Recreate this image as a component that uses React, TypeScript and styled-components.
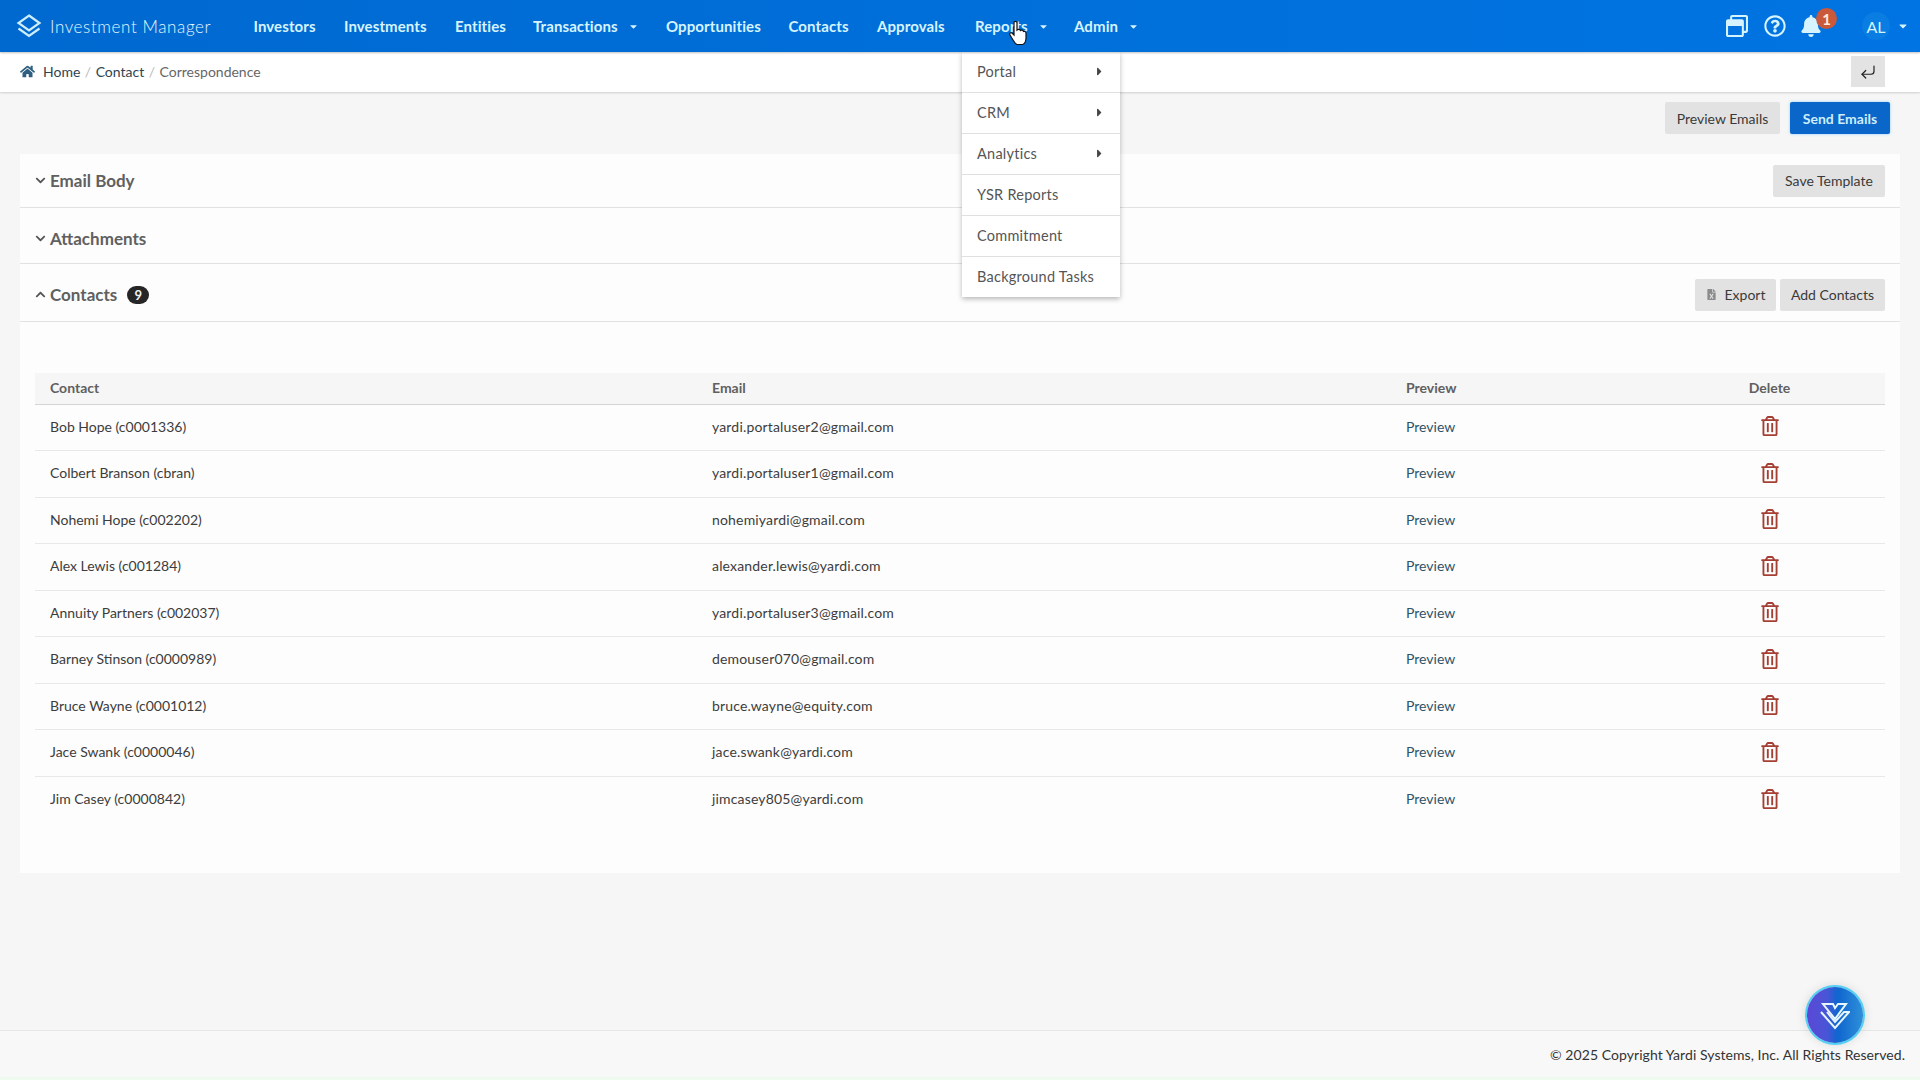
import styled, { createGlobalStyle } from "styled-components";
import { FaHome, FaChevronDown, FaChevronUp, FaCaretRight, FaCaretDown, FaFileExcel, FaBell, FaRegWindowRestore, FaRegQuestionCircle, FaRegTrashAlt } from "react-icons/fa";
import { CornerDownLeft } from "lucide-react";

const GlobalStyle = createGlobalStyle`
    * {
        box-sizing: border-box;
    }
    html, body {
        margin: 0;
        padding: 0;
    }
    body {
        background: #f6f6f6;
        color: #3c3c3c;
        font-family: "Lato", "Noto Sans", sans-serif;
        font-size: 14.5px;
    }
`

const Page = styled.div`
    background: #f6f6f6;
    border-bottom: 3px solid #effaef;
    display: flex;
    flex-direction: column;
    height: 1080px;
    overflow: hidden;
    position: relative;
    width: 1920px;
`

const NavBar = styled.header`
    align-items: center;
    background: linear-gradient(90deg, #0069d0 0%, #0070db 60%, #0074e2 100%);
    box-shadow: 0 1px 2px rgba(0, 0, 0, .25);
    display: flex;
    flex: 0 0 52px;
    padding: 0 0 0 16px;
    position: relative;
    z-index: 3;
`

const Brand = styled.div`
    align-items: center;
    color: #e4f7ff;
    display: flex;
    font-size: 17px;
    font-weight: 300;
    gap: 8px;
    letter-spacing: .6px;
    width: 237.5px;
`

const NavItem = styled.a<{ $width: number }>`
    align-items: center;
    color: #d6f4ff;
    display: flex;
    font-size: 15px;
    font-weight: 700;
    gap: 10px;
    height: 52px;
    letter-spacing: .1px;
    width: ${(p) => p.$width}px;
`

const NavRight = styled.div`
    align-items: center;
    color: #d6f4ff;
    display: flex;
    margin-left: auto;
    padding-right: 11px;
`

const NavIcon = styled.span<{ $width: number }>`
    align-items: center;
    display: flex;
    font-size: 22px;
    justify-content: center;
    position: relative;
    width: ${(p) => p.$width}px;
`

const CountBadge = styled.span`
    align-items: center;
    background: #c9593a;
    border-radius: 50%;
    color: #fbe9dc;
    display: flex;
    font-size: 15px;
    font-weight: 700;
    height: 21px;
    justify-content: center;
    left: 23px;
    position: absolute;
    top: -7px;
    width: 21px;
`

const Avatar = styled.span`
    align-items: center;
    background: #0a7de2;
    border-radius: 50%;
    color: #d6f4ff;
    display: flex;
    font-size: 16px;
    height: 28px;
    justify-content: center;
    margin: 0 7px 0 33px;
    width: 28px;
`

const Crumbs = styled.div`
    align-items: center;
    background: #fff;
    box-shadow: 0 1px 2px rgba(0, 0, 0, .16);
    display: flex;
    flex: 0 0 40px;
    font-size: 14px;
    padding: 0 35px 1px 20px;
    position: relative;
    z-index: 1;
`

const HomeIcon = styled(FaHome)`
    color: #2f5f80;
    font-size: 15px;
    margin-right: 8px;
`

const Crumb = styled.span<{ $current?: boolean }>`
    color: ${(p) => (p.$current ? "#666" : "#2f4452")};
`

const Slash = styled.span`
    color: #bbb;
    margin: 0 4.5px;
`

const BackButton = styled.button`
    align-items: center;
    background: #e3e3e3;
    border: 0;
    color: #222;
    display: flex;
    height: 31px;
    justify-content: center;
    margin-left: auto;
    padding: 0;
    width: 34px;
`

const TopActions = styled.div`
    align-items: center;
    display: flex;
    flex: 0 0 62px;
    gap: 10px;
    justify-content: flex-end;
    padding: 0 30px 10px 0;
`

const Button = styled.button<{ $primary?: boolean; $width: number }>`
    align-items: center;
    background: ${(p) => (p.$primary ? "#0a66c8" : "#e2e2e2")};
    border: 0;
    border-radius: 2px;
    box-shadow: ${(p) => (p.$primary ? "0 0 3px rgba(120, 200, 255, .8)" : "none")};
    color: ${(p) => (p.$primary ? "#cdeefc" : "#3a3a3a")};
    display: flex;
    font-family: inherit;
    font-size: 14px;
    font-weight: ${(p) => (p.$primary ? 700 : 400)};
    gap: 8px;
    height: 32px;
    justify-content: center;
    padding: 0;
    width: ${(p) => p.$width}px;
`

const Card = styled.main`
    background: #fdfdfd;
    display: flex;
    flex: 0 0 719px;
    flex-direction: column;
    margin: 0 20px;
`

const Section = styled.div<{ $height: number; $top?: number }>`
    align-items: center;
    border-bottom: 1px solid #e2e2e2;
    display: flex;
    flex: 0 0 ${(p) => p.$height}px;
    gap: 4px;
    padding: ${(p) => p.$top ?? 0}px 15px 0 15px;
`

const Chevron = styled.span`
    color: #555;
    display: flex;
    font-size: 11px;
`

const SectionTitle = styled.span`
    color: #606060;
    font-size: 17px;
    font-weight: 700;
`

const Pill = styled.span`
    align-items: center;
    background: #262626;
    border-radius: 9px;
    color: #f0f0f0;
    display: flex;
    font-size: 13px;
    font-weight: 700;
    height: 18px;
    justify-content: center;
    margin-left: 6px;
    width: 22px;
`

const SectionActions = styled.div`
    display: flex;
    gap: 4px;
    margin-left: auto;
`

const ExportIcon = styled(FaFileExcel)`
    color: #8b8b8b;
    font-size: 11px;
`

const Table = styled.table`
    border-collapse: collapse;
    margin: 51px 15px 0;
    table-layout: fixed;
    width: 1850px;
`

const HeadCell = styled.th<{ $center?: boolean }>`
    background: #f6f6f6;
    border-bottom: 1px solid #d4d4d4;
    color: #606060;
    font-size: 14px;
    font-weight: 700;
    height: 31px;
    padding: 0 15px 2px;
    text-align: ${(p) => (p.$center ? "center" : "left")};
`

const Cell = styled.td<{ $center?: boolean }>`
    border-bottom: 1px solid #e8e8e8;
    color: #3c3c3c;
    font-size: 14px;
    height: 46.5px;
    padding: 0 15px 2px;
    text-align: ${(p) => (p.$center ? "center" : "left")};

    tr:last-child > & {
        border-bottom: 0;
    }
`

const EmailCell = styled(Cell)`
    letter-spacing: .17px;
`

const PreviewLink = styled.a`
    color: #2f5368;
`

const TrashIcon = styled(FaRegTrashAlt)`
    color: #a53f33;
    font-size: 20px;
    vertical-align: middle;
`

const Footer = styled.footer`
    align-items: center;
    background: #f8f8f8;
    border-top: 1px solid #e6e6e6;
    color: #333;
    display: flex;
    font-size: 14px;
    height: 47px;
    justify-content: flex-end;
    letter-spacing: .06px;
    margin-top: auto;
    padding-right: 15px;
`

const Menu = styled.ul`
    background: #fff;
    box-shadow: 0 2px 5px rgba(0, 0, 0, .28);
    left: 962px;
    list-style: none;
    margin: 0;
    padding: 0;
    position: absolute;
    top: 52px;
    width: 158px;
    z-index: 2;
`

const MenuItem = styled.li<{ $first?: boolean }>`
    align-items: center;
    border-top: ${(p) => (p.$first ? "0" : "1px solid #e0e0e0")};
    color: #555;
    display: flex;
    font-size: 14.5px;
    height: ${(p) => (p.$first ? 40 : 41)}px;
    justify-content: space-between;
    letter-spacing: .25px;
    padding: 0 14px 1px 15px;
`

const MenuCaret = styled(FaCaretRight)`
    color: #444;
    font-size: 13px;
`

const Fab = styled.button`
    align-items: center;
    background: linear-gradient(90deg, #5a48d6 0%, #4a55d6 35%, #0f66cf 55%, #2f90d9 100%);
    border: 0;
    border-radius: 50%;
    bottom: 34px;
    box-shadow: 0 0 0 2px #55d0f5, 0 0 12px rgba(0, 0, 0, .18);
    display: flex;
    height: 56px;
    justify-content: center;
    padding: 0;
    position: absolute;
    right: 57px;
    width: 56px;
    z-index: 4;
`

const Cursor = styled.svg`
    left: 1008px;
    position: absolute;
    top: 20px;
    z-index: 5;
`

const navItems = [
    { label: "Investors", width: 90.5 },
    { label: "Investments", width: 111 },
    { label: "Entities", width: 78 },
    { label: "Transactions", width: 133, caret: true },
    { label: "Opportunities", width: 122.5 },
    { label: "Contacts", width: 88.5 },
    { label: "Approvals", width: 98 },
    { label: "Reports", width: 99, caret: true },
    { label: "Admin", width: 80, caret: true },
]

const menuItems = [
    { label: "Portal", sub: true },
    { label: "CRM", sub: true },
    { label: "Analytics", sub: true },
    { label: "YSR Reports" },
    { label: "Commitment" },
    { label: "Background Tasks" },
]

const contacts = [
    ["Bob Hope (c0001336)", "yardi.portaluser2@gmail.com"],
    ["Colbert Branson (cbran)", "yardi.portaluser1@gmail.com"],
    ["Nohemi Hope (c002202)", "nohemiyardi@gmail.com"],
    ["Alex Lewis (c001284)", "alexander.lewis@yardi.com"],
    ["Annuity Partners (c002037)", "yardi.portaluser3@gmail.com"],
    ["Barney Stinson (c0000989)", "demouser070@gmail.com"],
    ["Bruce Wayne (c0001012)", "bruce.wayne@equity.com"],
    ["Jace Swank (c0000046)", "jace.swank@yardi.com"],
    ["Jim Casey (c0000842)", "jimcasey805@yardi.com"],
]

const Logo = () => (
    <svg width="26" height="26" viewBox="0 0 26 26" fill="none" stroke="#cfeefb" strokeWidth="2.2" strokeLinejoin="miter">
        <path d="M13 2.5 L23.5 10 L13 17.5 L2.5 10 Z" />
        <path d="M2.5 15.5 L13 23 L23.5 15.5" />
    </svg>
)

const FabMark = () => (
    <svg width="30" height="30" viewBox="0 0 30 30" fill="none" stroke="#e6f6ff" strokeWidth="2">
        <path d="M3 4 H13 L15 8 L18 4 H26 L15 19 L3 4 Z" strokeLinejoin="miter" />
        <path d="M1 12 L15 28 L29 12 L24 12 L15 22 L7 12" strokeLinejoin="miter" />
    </svg>
)

const App = () => {
    return (
        <Page>
            <GlobalStyle />
            <NavBar>
                <Brand>
                    <Logo />
                    Investment Manager
                </Brand>
                {navItems.map((item) => (
                    <NavItem key={item.label} $width={item.width}>
                        {item.label}
                        {item.caret && <FaCaretDown size={11} />}
                    </NavItem>
                ))}
                <NavRight>
                    <NavIcon $width={38}><FaRegWindowRestore /></NavIcon>
                    <NavIcon $width={37}><FaRegQuestionCircle /></NavIcon>
                    <NavIcon $width={36}>
                        <FaBell />
                        <CountBadge>1</CountBadge>
                    </NavIcon>
                    <Avatar>AL</Avatar>
                    <FaCaretDown size={12} />
                </NavRight>
            </NavBar>
            <Crumbs>
                <HomeIcon />
                <Crumb>Home</Crumb>
                <Slash>/</Slash>
                <Crumb>Contact</Crumb>
                <Slash>/</Slash>
                <Crumb $current>Correspondence</Crumb>
                <BackButton><CornerDownLeft size={18} strokeWidth={1.6} /></BackButton>
            </Crumbs>
            <TopActions>
                <Button $width={115}>Preview Emails</Button>
                <Button $primary $width={100}>Send Emails</Button>
            </TopActions>
            <Card>
                <Section $height={54}>
                    <Chevron><FaChevronDown /></Chevron>
                    <SectionTitle>Email Body</SectionTitle>
                    <SectionActions>
                        <Button $width={112}>Save Template</Button>
                    </SectionActions>
                </Section>
                <Section $height={56} $top={5}>
                    <Chevron><FaChevronDown /></Chevron>
                    <SectionTitle>Attachments</SectionTitle>
                </Section>
                <Section $height={58} $top={4}>
                    <Chevron><FaChevronUp /></Chevron>
                    <SectionTitle>Contacts</SectionTitle>
                    <Pill>9</Pill>
                    <SectionActions>
                        <Button $width={81}><ExportIcon />Export</Button>
                        <Button $width={105}>Add Contacts</Button>
                    </SectionActions>
                </Section>
                <Table>
                    <colgroup>
                        <col style={{ width: 662 }} />
                        <col style={{ width: 694 }} />
                        <col style={{ width: 263 }} />
                        <col style={{ width: 231 }} />
                    </colgroup>
                    <thead>
                        <tr>
                            <HeadCell>Contact</HeadCell>
                            <HeadCell>Email</HeadCell>
                            <HeadCell>Preview</HeadCell>
                            <HeadCell $center>Delete</HeadCell>
                        </tr>
                    </thead>
                    <tbody>
                        {contacts.map(([name, email]) => (
                            <tr key={name}>
                                <Cell>{name}</Cell>
                                <EmailCell>{email}</EmailCell>
                                <Cell><PreviewLink>Preview</PreviewLink></Cell>
                                <Cell $center><TrashIcon /></Cell>
                            </tr>
                        ))}
                    </tbody>
                </Table>
            </Card>
            <Footer>© 2025 Copyright Yardi Systems, Inc. All Rights Reserved.</Footer>
            <Menu>
                {menuItems.map((item, i) => (
                    <MenuItem key={item.label} $first={i === 0}>
                        {item.label}
                        {item.sub && <MenuCaret />}
                    </MenuItem>
                ))}
            </Menu>
            <Fab><FabMark /></Fab>
            <Cursor width="20" height="26" viewBox="0 0 20 26">
                <path d="M6 2.5 C6 1 9 1 9 2.5 V10 C10 9 12 9 12.5 10.5 C13.5 9.8 15 10 15.5 11.5 C16.5 11 18 11.5 18 13 V18 C18 21 16.5 24 14.5 24.5 H9 C7.5 24 6.5 22.5 5 20 L2 15 C1 13 3 12 4.5 13.5 L6 15 Z" fill="#fff" stroke="#111" strokeWidth="1.2" />
            </Cursor>
        </Page>
    )
}

export default App;
